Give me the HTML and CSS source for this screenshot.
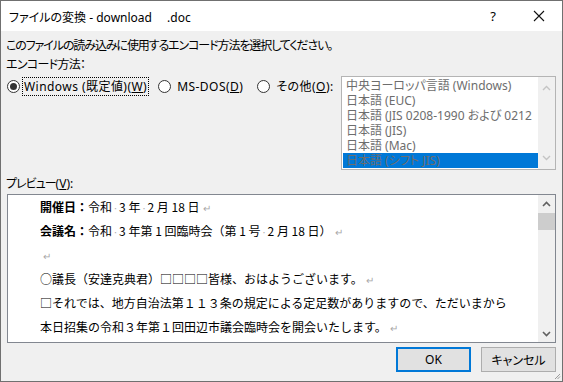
FILE: index.html
```html
<!DOCTYPE html>
<html lang="ja">
<head>
  <meta charset="UTF-8" />
  <title>ファイルの変換</title>
  <link rel="stylesheet" href="styles.css">
</head>
<body>
  <div class="window">
    <div class="titlebar">
      <span class="title">ファイルの変換 - download　 .doc</span>
      <span class="tb-btn help">?</span>
      <span class="tb-btn close">
        <svg width="12" height="12" viewBox="0 0 12 12"><path d="M1 1 L11 11 M11 1 L1 11" stroke="#111" stroke-width="1.1" fill="none"/></svg>
      </span>
    </div>

    <div class="content">
      <div class="line intro">このファイルの読み込みに使用するエンコード方法を選択してください。</div>
      <div class="line enc-label">エンコード方法：</div>

      <div class="options">
        <div class="radios">
          <span class="radio checked"></span>
          <span class="radio-text focus">Windows (既定値)(<u>W</u>)</span>
          <span class="radio second"></span>
          <span class="radio-text">MS-DOS(<u>D</u>)</span>
          <span class="radio third"></span>
          <span class="radio-text">その他(<u>O</u>):</span>
        </div>

        <div class="listbox">
          <ul class="items">
            <li>中央ヨーロッパ言語 (Windows)</li>
            <li>日本語 (EUC)</li>
            <li>日本語 (JIS 0208-1990 および 0212</li>
            <li>日本語 (JIS)</li>
            <li>日本語 (Mac)</li>
            <li class="selected">日本語 (シフト JIS)</li>
          </ul>
          <div class="scroll light">
            <svg width="9" height="6" viewBox="0 0 9 6"><path d="M1 5 L4.5 1.5 L8 5" stroke="#c4c4c4" stroke-width="1.4" fill="none"/></svg>
            <svg width="9" height="6" viewBox="0 0 9 6"><path d="M1 1 L4.5 4.5 L8 1" stroke="#c4c4c4" stroke-width="1.4" fill="none"/></svg>
          </div>
        </div>
      </div>

      <div class="line preview-label"><span class="jp">プレビュー</span>(<u>V</u>):</div>

      <div class="preview">
        <div class="doc">
          <p><b>開催日：</b>令和<i>·</i>3 年<i>·</i>2 月 18 日<em>↵</em></p>
          <p><b>会議名：</b>令和<i>·</i>3 年第 1 回臨時会（第 1 号<i>·</i>2 月 18 日）<em>↵</em></p>
          <p><em>↵</em></p>
          <p>○議長（安達克典君）□□□□皆様、おはようございます。<em>↵</em></p>
          <p>□それでは、地方自治法第１１３条の規定による定足数がありますので、ただいまから</p>
          <p>本日招集の令和３年第１回田辺市議会臨時会を開会いたします。<em>↵</em></p>
        </div>
        <div class="scroll">
          <svg width="9" height="6" viewBox="0 0 9 6"><path d="M1 5 L4.5 1.5 L8 5" stroke="#606060" stroke-width="1.6" fill="none"/></svg>
          <span class="thumb"></span>
          <svg class="down" width="9" height="6" viewBox="0 0 9 6"><path d="M1 1 L4.5 4.5 L8 1" stroke="#606060" stroke-width="1.6" fill="none"/></svg>
        </div>
      </div>

      <div class="buttons">
        <button class="btn default">OK</button>
        <button class="btn">キャンセル</button>
      </div>
    </div>

    <svg class="grip" width="7" height="7" viewBox="0 0 7 7">
      <path d="M6 1 L1 6 M6 3.5 L3.5 6" stroke="#9a9a9a" stroke-width="1" fill="none"/>
    </svg>
  </div>
</body>
</html>
```

FILE: styles.css
```css
* {
  box-sizing: border-box;
}
body {
  margin: 0;
  font-family: "Noto Sans", "Noto Sans CJK JP", sans-serif;
  font-size: 12px;
  color: #000;
  background: #f0f0f0;
}
.window {
  position: relative;
  width: 563px;
  height: 382px;
  border: 1px solid #707070;
  background: #f0f0f0;
}
.titlebar {
  display: flex;
  align-items: center;
  height: 30px;
  background: #fff;
  font-feature-settings: "palt";
}
.title {
  flex: 1;
  padding-left: 8px;
  margin-top: 1px;
}
.tb-btn {
  width: 46px;
  height: 30px;
  display: flex;
  align-items: center;
  justify-content: center;
}
.help {
  font-size: 13px;
}
.content {
  padding: 7px 6px 0 4px;
}
.line {
  line-height: 16px;
  font-feature-settings: "palt";
  padding-left: 1px;
}
.intro {
  letter-spacing: -1.1px;
}
.enc-label {
  margin-top: 3px;
  letter-spacing: -0.7px;
}
.jp {
  letter-spacing: -1px;
}
.options {
  display: flex;
  margin-top: 3px;
}
.radios {
  display: flex;
  align-items: center;
  height: 19px;
  margin-top: 1px;
  padding-left: 2px;
  font-feature-settings: "palt";
  flex: 1;
}
.radio {
  width: 13px;
  height: 13px;
  border: 1px solid #333;
  border-radius: 50%;
  background: #fff;
  display: flex;
  align-items: center;
  justify-content: center;
  flex-shrink: 0;
}
.radio.checked::after {
  content: "";
  width: 7px;
  height: 7px;
  border-radius: 50%;
  background: #333;
}
.radio-text {
  margin-left: 4px;
  height: 19px;
  line-height: 17px;
  padding: 0 1px;
  letter-spacing: 0.45px;
  border: 1px dotted transparent;
}
.radio-text.focus {
  margin-left: 2px;
  border-color: #000;
}
.radio.second {
  margin-left: 9px;
}
.radio.third {
  margin-left: 12px;
}
.listbox {
  display: flex;
  width: 215px;
  height: 94px;
  border: 1px solid #b4b4b4;
  background: #fff;
}
.items {
  list-style: none;
  margin: 0;
  padding: 1px 0 0 1px;
  flex: 1;
  overflow: hidden;
  font-feature-settings: "palt";
}
.items li {
  height: 15px;
  line-height: 15px;
  padding-left: 3px;
  color: #6d6d6d;
  white-space: nowrap;
  overflow: hidden;
}
.items li.selected {
  background: #0078d7;
  color: #6d6d6d;
}
.scroll {
  width: 17px;
  display: flex;
  flex-direction: column;
  align-items: center;
  background: #f0f0f0;
  padding: 6px 0 5px;
}
.scroll.light {
  justify-content: space-between;
  padding: 8px 0 8px;
}
.preview-label {
  margin-top: 6px;
}
.preview {
  display: flex;
  height: 149px;
  margin: 2px 0 0 2px;
  border: 1px solid #828790;
  background: #fff;
}
.doc {
  flex: 1;
  padding-left: 32px;
  font-family: "Noto Sans CJK JP", sans-serif;
  overflow: hidden;
}
.doc p {
  margin: 0;
  height: 24px;
  line-height: 24px;
  white-space: nowrap;
}
.doc b {
  font-weight: 700;
}
.doc i {
  font-style: normal;
  color: #a8a8a8;
  font-size: 9px;
  padding: 0 1px;
}
.doc em {
  font-style: normal;
  color: #a8a8a8;
  font-size: 10px;
  margin-left: 3px;
}
.thumb {
  width: 17px;
  height: 17px;
  margin-top: 6px;
  background: #cdcdcd;
}
.scroll .down {
  margin-top: auto;
}
.buttons {
  display: flex;
  justify-content: flex-end;
  gap: 10px;
  margin-top: 4px;
}
.btn {
  width: 75px;
  height: 25px;
  font-family: "Noto Sans", "Noto Sans CJK JP", sans-serif;
  font-size: 12px;
  font-feature-settings: "palt";
  background: #e1e1e1;
  border: 1px solid #adadad;
  padding: 0;
  color: #000;
}
.btn.default {
  border: 2px solid #0078d7;
}
.grip {
  position: absolute;
  right: 1px;
  bottom: 1px;
}
```
